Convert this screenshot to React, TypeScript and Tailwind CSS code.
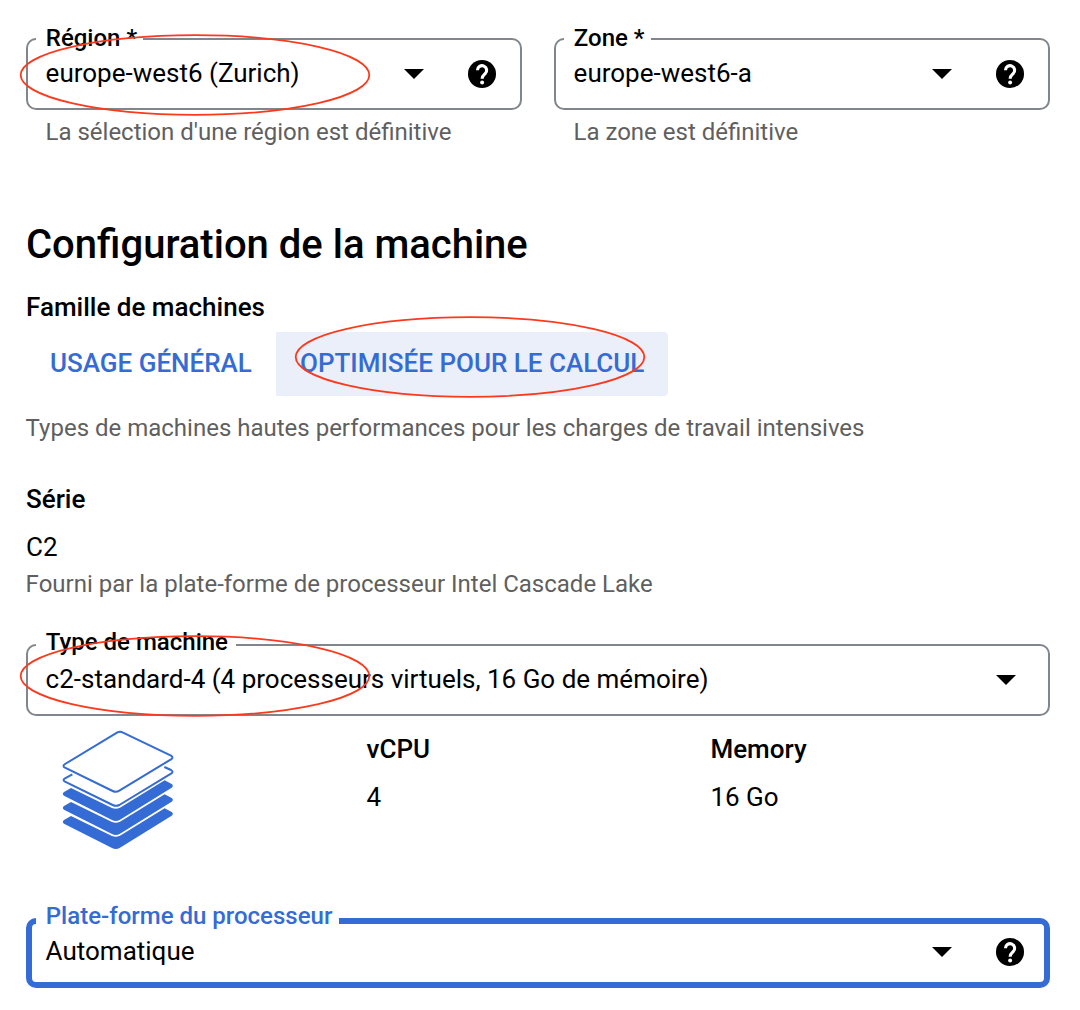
import { ReactNode } from "react";

function HelpIcon() {
  return (
    <svg viewBox="0 0 24 24" className="block size-[34px]">
      <circle cx="12" cy="12" r="9.9" fill="currentColor" />
      <path d="M8.8 9.4a3.25 3.25 0 1 1 5.4 2.4C13 12.9 12.1 13.5 12.1 15.3" fill="none" stroke="#fff" strokeWidth="2.2" />
      <circle cx="12.1" cy="18" r="1.4" fill="#fff" />
    </svg>
  );
}

function Arrow() {
  return (
    <svg viewBox="0 0 20 10" className="block h-[10px] w-[20px]" fill="currentColor">
      <path d="M0 0h20L10 10z" />
    </svg>
  );
}

type FieldProps = {
  label: string;
  value: string;
  labelClass: string;
  boxClass: string;
  help?: boolean;
};

function Field({ label, value, labelClass, boxClass, help }: FieldProps) {
  return (
    <div className={`relative flex items-center rounded-[10px] ${boxClass}`}>
      <span className={`absolute bg-white pl-[9.8px] text-[24px] font-medium leading-[28px] whitespace-nowrap ${labelClass}`}>
        {label}
      </span>
      <span className="flex-1 whitespace-nowrap pb-[2px] text-[26px] leading-[32px]">{value}</span>
      <Arrow />
      {help && (
        <span className="ml-[41px] mr-[-3px]">
          <HelpIcon />
        </span>
      )}
    </div>
  );
}

function Ring({ className }: { className: string }) {
  return (
    <svg viewBox="0 0 352 82" className={`pointer-events-none absolute h-[82px] w-[352px] ${className}`}>
      <ellipse cx="176" cy="41" rx="174.3" ry="39.8" fill="none" stroke="#fb3a1d" strokeWidth="1.8" />
    </svg>
  );
}

function StackIcon() {
  return (
    <svg viewBox="0 0 450 420" className="block h-[140px] w-[150px]">
      <g fill="none" stroke="#346bd4" strokeWidth="6" strokeLinejoin="round" strokeLinecap="butt">
        <path d="M231 38Q240 33 249 38L393 107Q402 112 393 118L238 212Q228 218 218 213L75 143Q66 138 75 132Z" />
        <path d="M97 163L75 175Q66 180 75 185L218 255Q228 260 238 255L393 161Q402 155 393 150L373 141" />
      </g>
      <g fill="#346bd4">
        <path d="M93 204L72 216Q65 222 72 227L216 300Q228 306 240 299L395 203Q402 197 395 192L374 181L240 263Q228 269 216 264Z" />
        <path d="M93 246L72 258Q65 264 72 269L216 342Q228 348 240 341L395 245Q402 239 395 234L374 223L240 305Q228 311 216 306Z" />
        <path d="M93 288L72 300Q65 306 72 311L216 384Q228 390 240 383L395 287Q402 281 395 276L374 265L240 347Q228 353 216 348Z" />
      </g>
    </svg>
  );
}

function Spec({ name, children, className }: { name: string; children: ReactNode; className: string }) {
  return (
    <div className={`pt-[17px] text-[26px] leading-[32px] ${className}`}>
      <div className="font-medium">{name}</div>
      <div className="mt-4">{children}</div>
    </div>
  );
}

export default function App() {
  return (
    <main className="relative h-[1010px] w-[1080px] overflow-hidden bg-white pl-[26px] pt-[38px] font-['Roboto',sans-serif] text-black">
      <div className="flex gap-8">
        <div className="relative w-[496px]">
          <Field
            label="Région *"
            value="europe-west6 (Zurich)"
            boxClass="h-[72px] border-2 border-[#80868b] pl-[17.6px] pr-[24px]"
            labelClass="left-[8px] top-[-16px] w-[107px]"
            help
          />
          <p className="mt-[6px] pl-[19.5px] text-[24px] leading-[32px] text-[#5f5f5f]">La sélection d'une région est définitive</p>
          <Ring className="left-[-7px] top-[-4px]" />
        </div>
        <div className="w-[496px]">
          <Field
            label="Zone *"
            value="europe-west6-a"
            boxClass="h-[72px] border-2 border-[#80868b] pl-[17.6px] pr-[24px]"
            labelClass="left-[8px] top-[-16px] w-[87px]"
            help
          />
          <p className="mt-[6px] pl-[19.5px] text-[24px] leading-[32px] text-[#5f5f5f]">La zone est définitive</p>
        </div>
      </div>

      <h1 className="mt-[73px] text-[40px] font-medium leading-[48px]">Configuration de la machine</h1>
      <h2 className="mt-[22px] text-[26px] font-medium leading-[32px]">Famille de machines</h2>
      <div className="mt-[9px] flex h-[64px] text-[26px] font-medium leading-[62px] text-[#346bd4]">
        <button className="flex w-[250px] whitespace-nowrap pl-6 text-left">USAGE GÉNÉRAL</button>
        <div className="relative w-[392px] rounded-r-[4px] bg-[#ebeffa]">
          <button className="flex whitespace-nowrap pl-6">OPTIMISÉE POUR LE CALCUL</button>
          <Ring className="left-[18px] top-[-16px]" />
        </div>
      </div>
      <p className="-ml-[0.4px] mt-4 text-[24px] leading-[32px] text-[#5f5f5f]">
        Types de machines hautes performances pour les charges de travail intensives
      </p>

      <h2 className="mt-[39px] text-[26px] font-medium leading-[32px]">Série</h2>
      <p className="mt-4 text-[26px] leading-[32px]">C2</p>
      <p className="-ml-[0.4px] mt-[5px] text-[24px] leading-[32px] text-[#5f5f5f]">
        Fourni par la plate-forme de processeur Intel Cascade Lake
      </p>

      <div className="relative mt-[44px] w-[1024px]">
        <Field
          label="Type de machine"
          value="c2-standard-4 (4 processeurs virtuels, 16 Go de mémoire)"
          boxClass="h-[72px] border-2 border-[#80868b] pl-[17.6px] pr-[32px]"
          labelClass="left-[8px] top-[-18px] w-[200px]"
        />
        <Ring className="left-[-7px] top-[-9px]" />
      </div>

      <div className="flex h-[202px]">
        <div className="ml-[14px] mt-1 w-[150px]">
          <StackIcon />
        </div>
        <Spec name="vCPU" className="ml-[176.6px] w-[343.8px]">4</Spec>
        <Spec name="Memory" className="">16 Go</Spec>
      </div>

      <div className="w-[1024px]">
        <Field
          label="Plate-forme du processeur"
          value="Automatique"
          boxClass="h-[70px] border-[6px] border-[#346bd4] pb-[2px] pl-[13.6px] pr-[20px]"
          labelClass="left-[4px] top-[-22px] w-[303px] text-[#346bd4]"
          help
        />
      </div>
    </main>
  );
}
